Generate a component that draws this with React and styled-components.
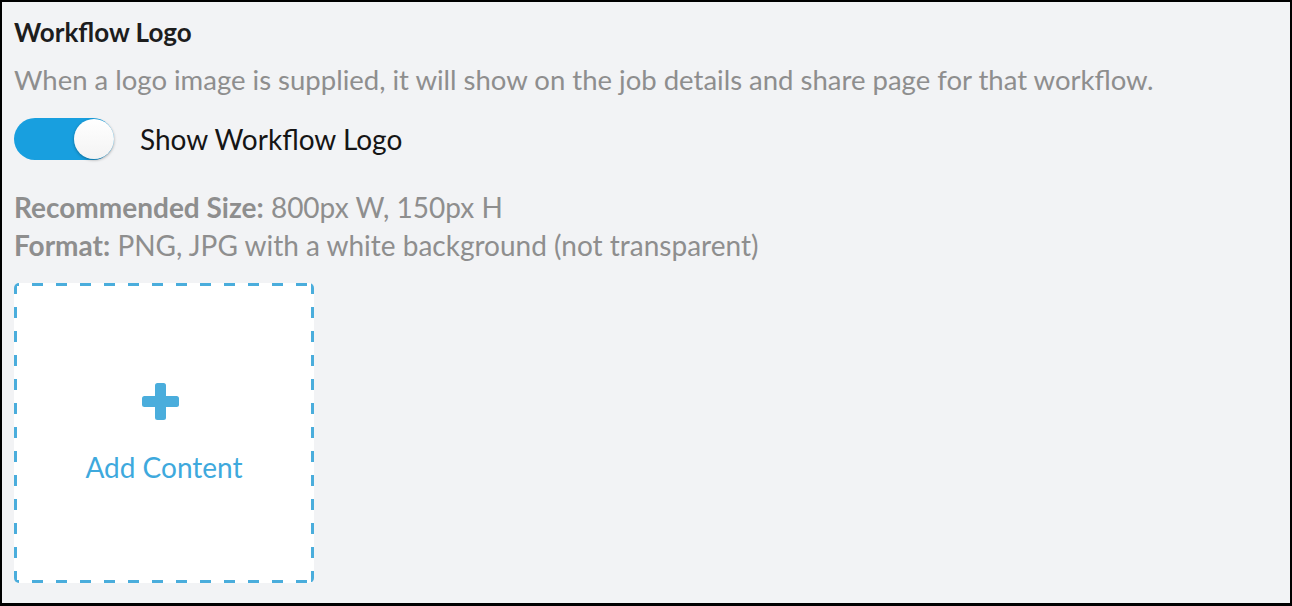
import React, { useState } from "react";
import styled, { createGlobalStyle } from "styled-components";

const GlobalStyle = createGlobalStyle`
    html, body {
        margin: 0;
        padding: 0;
        background: #ffffff;
    }

    body {
        font-family: Lato, "Open Sans", sans-serif;
    }
`;

const DASH = "#4aaddc";

const Panel = styled.section`
    box-sizing: border-box;
    width: 1292px;
    height: 606px;
    border: 2px solid #000;
    border-bottom-width: 3px;
    background: #f2f3f5;
    padding: 15px 12px 0 12px;
    display: flex;
    flex-direction: column;
    align-items: flex-start;
`;

const Title = styled.h2`
    margin: 0;
    font-size: 26px;
    font-weight: 700;
    color: #1d1d1d;
    line-height: 30px;
`;

const Description = styled.p`
    margin: 17px 0 0;
    font-size: 27.5px;
    color: #8e8e8e;
    line-height: 32px;
`;

const ToggleRow = styled.label`
    display: flex;
    align-items: center;
    gap: 26px;
    margin-top: 22px;
    cursor: pointer;
`;

const Track = styled.span`
    position: relative;
    display: inline-block;
    width: 100px;
    height: 42px;
    border-radius: 21px;
    background: ${({ $on }) => ($on ? "#189fdf" : "#c9ccd1")};
    transition: background 0.2s;
`;

const Knob = styled.span`
    position: absolute;
    top: 1px;
    left: ${({ $on }) => ($on ? "60px" : "1px")};
    width: 40px;
    height: 40px;
    border-radius: 50%;
    background: linear-gradient(180deg, #ffffff 0%, #f3f3f3 100%);
    box-shadow: 0 1px 3px rgba(0, 0, 0, 0.35);
    transition: left 0.2s;
`;

const ToggleLabel = styled.span`
    font-size: 28px;
    color: #151515;
    line-height: 34px;
`;

const Specs = styled.div`
    margin-top: 28px;
    font-size: 28px;
    line-height: 38px;
    color: #8e8e8e;

    b {
        font-weight: 700;
    }
`;

const DropZone = styled.button`
    box-sizing: border-box;
    margin-top: 19px;
    width: 300px;
    height: 300px;
    border: none;
    border-radius: 5px;
    background:
        linear-gradient(90deg, ${DASH} 0 11px, transparent 11px) 18px 0 / 24px 3px repeat-x,
        linear-gradient(90deg, ${DASH} 0 11px, transparent 11px) 18px 100% / 24px 3px repeat-x,
        linear-gradient(180deg, ${DASH} 0 11px, transparent 11px) 0 24px / 3px 24px repeat-y,
        linear-gradient(180deg, ${DASH} 0 11px, transparent 11px) 100% 24px / 3px 24px repeat-y,
        #ffffff;
    display: flex;
    flex-direction: column;
    align-items: center;
    justify-content: flex-start;
    gap: 30px;
    padding: 100px 0 0;
    cursor: pointer;
    font-family: inherit;
`;

const PlusMark = styled.svg`
    display: block;
    margin-right: 7px;
`;

const AddText = styled.span`
    font-size: 28px;
    line-height: 34px;
    color: #3ea9dd;
`;

function PlusIcon() {
    return (
        <PlusMark width="37" height="37" viewBox="0 0 37 37">
            <rect x="13" y="0" width="11" height="37" rx="2.5" fill={DASH} />
            <rect x="0" y="13" width="37" height="11" rx="2.5" fill={DASH} />
        </PlusMark>
    );
}

export default function App() {
    const [showLogo, setShowLogo] = useState(true);

    return (
        <>
            <GlobalStyle />
            <Panel>
                <Title>Workflow Logo</Title>
                <Description>
                    When a logo image is supplied, it will show on the job details and share page for that workflow.
                </Description>

                <ToggleRow onClick={() => setShowLogo(!showLogo)}>
                    <Track $on={showLogo}>
                        <Knob $on={showLogo} />
                    </Track>
                    <ToggleLabel>Show Workflow Logo</ToggleLabel>
                </ToggleRow>

                <Specs>
                    <div><b>Recommended Size:</b> 800px W, 150px H</div>
                    <div><b>Format:</b> PNG, JPG with a white background (not transparent)</div>
                </Specs>

                <DropZone type="button">
                    <PlusIcon />
                    <AddText>Add Content</AddText>
                </DropZone>
            </Panel>
        </>
    );
}
